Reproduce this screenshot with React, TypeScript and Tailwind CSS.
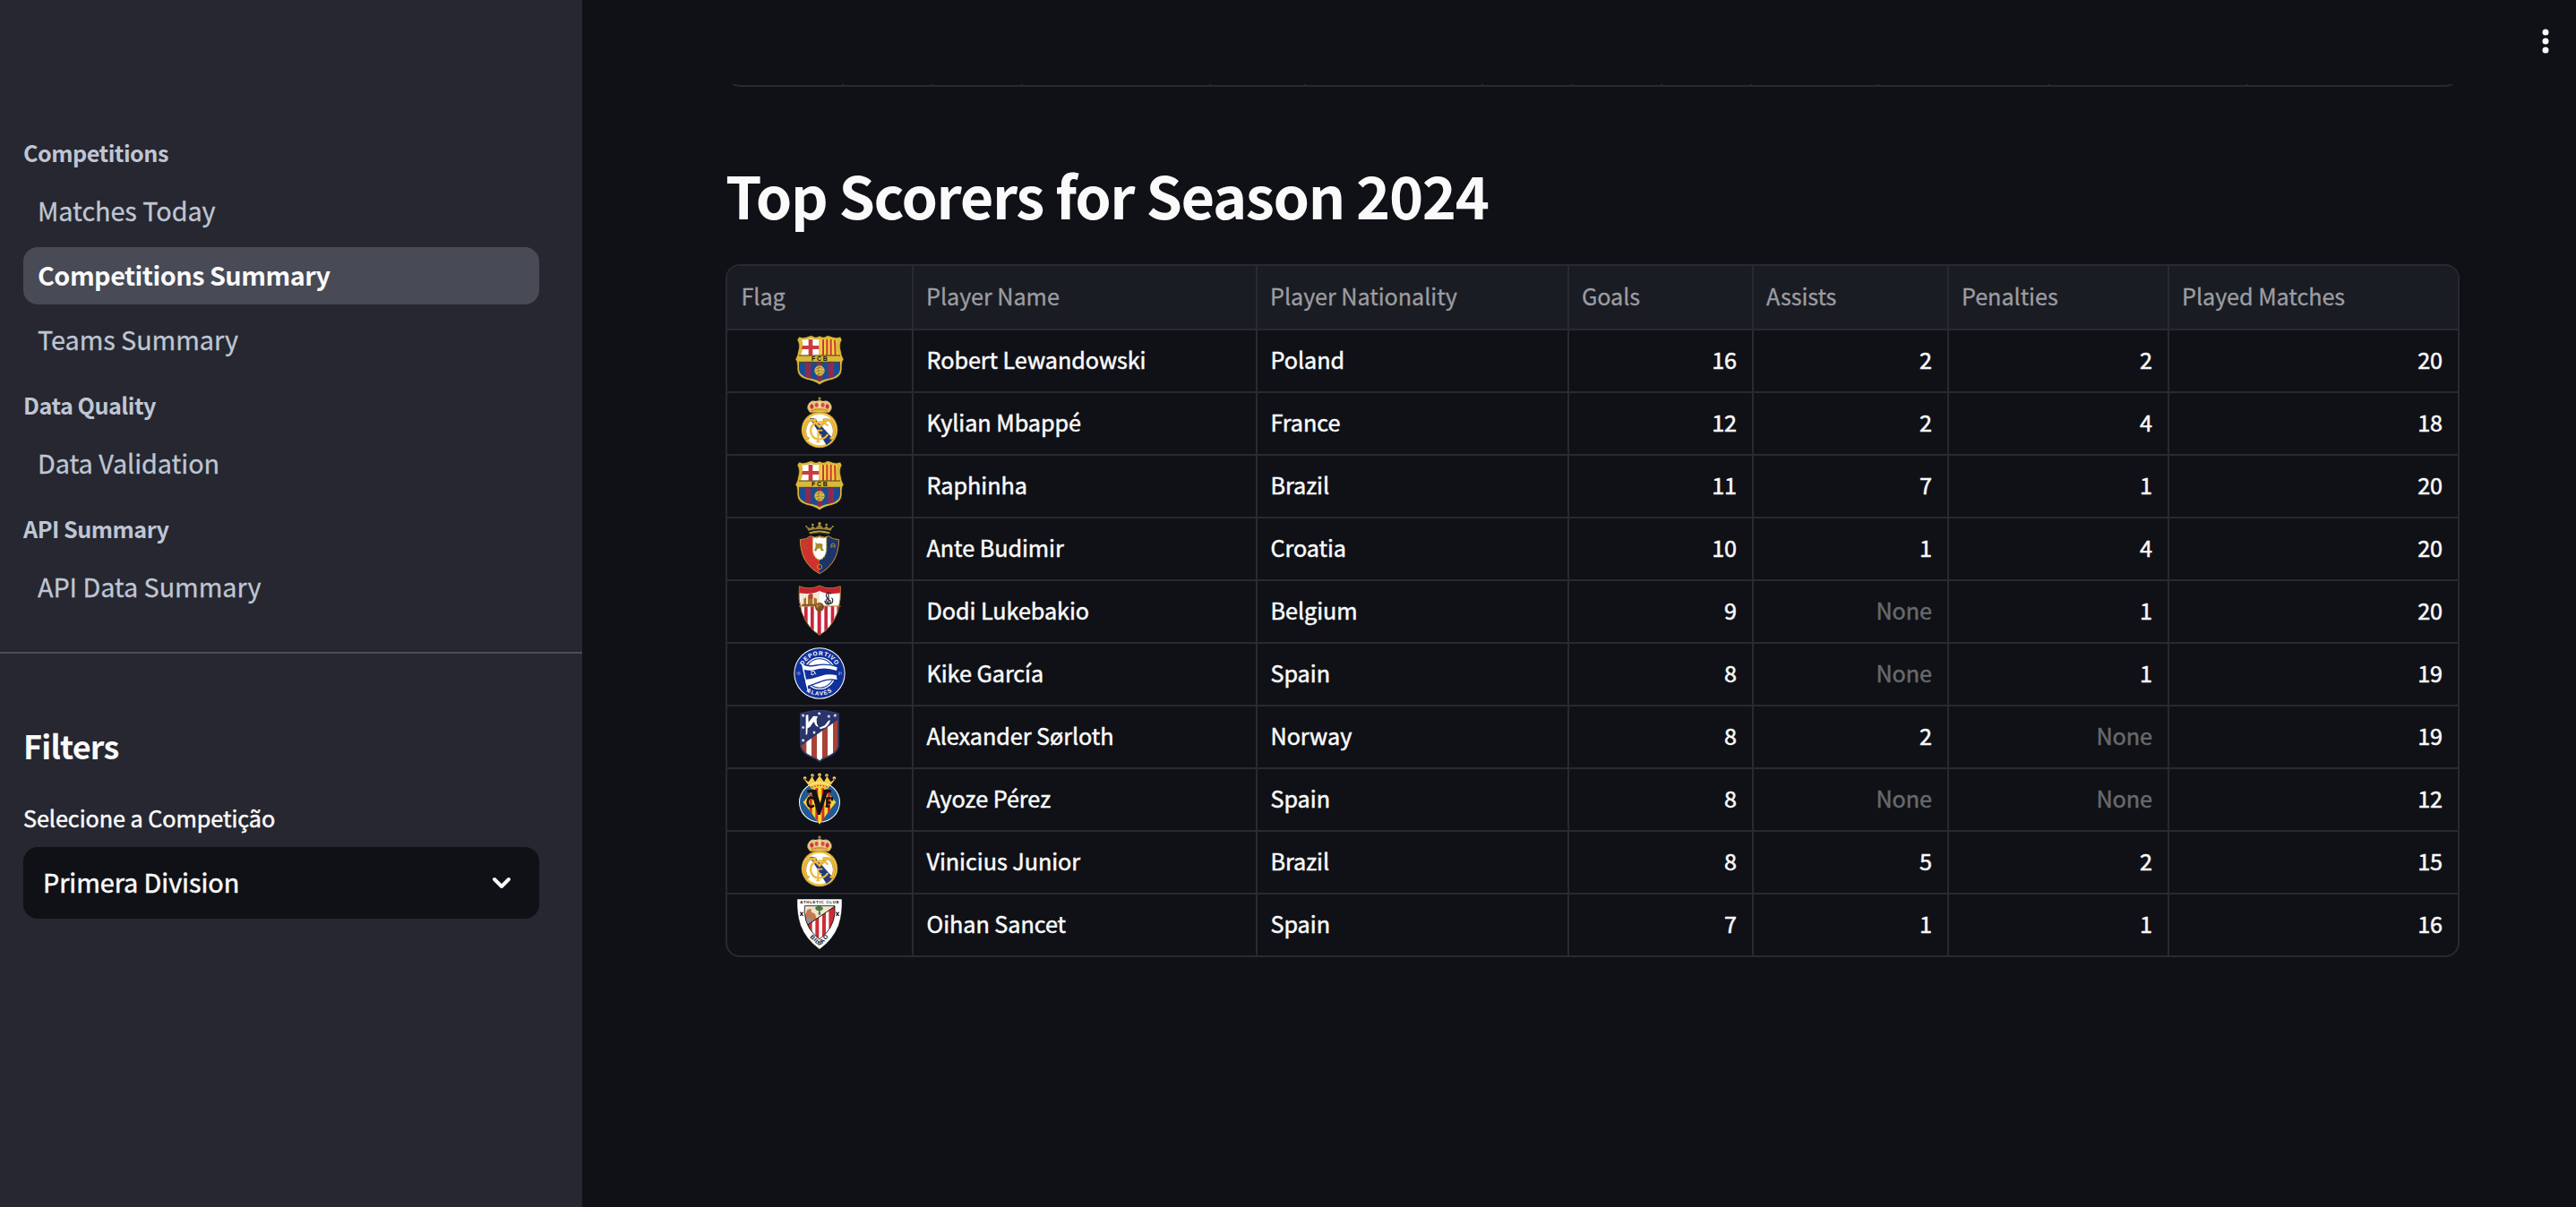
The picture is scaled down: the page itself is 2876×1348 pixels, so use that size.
import React, { ReactNode } from "react";

const Barcelona = () => (
  <svg viewBox="45 21 180 180" className="h-[60px] w-[60px]">
    <path d="M66 30Q78 36 92 31Q101 26 109 26Q122 36 135 27Q148 36 161 26Q168 26 178 31Q192 36 205 30L210 41Q200 56 207 78Q208 92 216 106Q210 112 210 126V140Q208 166 178 174Q148 180 135 191Q122 180 92 174Q62 166 60 140V126Q60 112 54 106Q62 92 63 78Q70 56 60 41Z" fill="#dcb83a" stroke="#191306" strokeWidth="2" />
    <path d="M76 40Q96 42 107 35Q120 43 133 38V92H72Q84 66 76 40Z" fill="#fff" />
    <path d="M98 39H112V92H98ZM78 60H133V72H75Z" fill="#cb3b3f" />
    <path d="M137 38Q150 43 163 35Q174 42 194 40Q186 66 198 92H137Z" fill="#f3d33c" />
    <path d="M144 40h6v52h-6zM157 38h6v54h-6zM170 39h6v53h-6zM183 41h6l2 51h-6z" fill="#c9363c" />
    <path d="M66 116H204V140Q202 160 174 168Q146 173 135 181Q124 173 96 168Q68 160 66 140Z" fill="#1c4c90" />
    <path d="M87 116h18v54q-12-2-18-6zM126 116h18v58l-9 7-9-7zM164 116h19v48q-8 4-19 6z" fill="#8e2a52" />
    <path d="M66 93H204M66 115H204" stroke="#2b2410" strokeWidth="2.500" />
    <circle cx="135" cy="144" r="17" fill="#e0c04a" />
    <path d="M122 138q12-8 26-2M120 148q14-8 31-2M126 157q10-6 22-4M134 128q-8 16 0 32" fill="none" stroke="#7c641c" strokeWidth="2" />
    <text x="137" y="111" textAnchor="middle" fontSize="21" fontWeight="700" letterSpacing="5" fill="#17130a" fontFamily="Liberation Sans, sans-serif">FCB</text>
  </svg>
);

const RealMadrid = () => (
  <svg viewBox="45 231 180 180" className="h-[60px] w-[60px]">
    <path d="M103 284Q88 268 98 256Q108 244 124 246Q135 240 146 246Q162 244 172 256Q182 268 167 284Z" fill="#e5c77a" stroke="#8c6f2c" strokeWidth="1.5" />
    <path d="M135 232v12M130 237h10" stroke="#d5ab45" strokeWidth="3" />
    <ellipse cx="109" cy="264" rx="6" ry="8" fill="#c9323f" />
    <ellipse cx="125" cy="259" rx="6" ry="8" fill="#d94a52" />
    <ellipse cx="146" cy="259" rx="6" ry="8" fill="#d94a52" />
    <ellipse cx="161" cy="264" rx="6" ry="8" fill="#c9323f" />
    <path d="M99 255Q110 240 125 250M171 255Q160 240 145 250M135 246V270" fill="none" stroke="#fff2cf" strokeWidth="2.5" />
    <path d="M104 275Q135 264 166 275V283Q135 274 104 283Z" fill="#e0b33c" />
    <path d="M108 278Q135 268 162 278" fill="none" stroke="#c6374a" strokeWidth="2.5" strokeDasharray="5 4" />
    <circle cx="135" cy="342" r="61" fill="#8a7430" />
    <circle cx="135" cy="342" r="59.5" fill="#efbf3c" />
    <circle cx="135" cy="342" r="52" fill="#fff" />
    <path d="M101 304L112 318 158 393Q171 385 180 372L123 309Q112 299 101 304Z" fill="#21397e" />
    <path d="M93 372Q80 346 91 324Q99 306 112 309L135 332L158 309Q172 306 179 324Q190 346 177 372M84 370H100M170 370H186M112 309H124M146 309H158" fill="none" stroke="#99752a" strokeWidth="8.500" />
    <path d="M93 372Q80 346 91 324Q99 306 112 309L135 332L158 309Q172 306 179 324Q190 346 177 372M84 370H100M170 370H186M112 309H124M146 309H158" fill="none" stroke="#efbb38" strokeWidth="6.500" />
    <path d="M163 329Q151 313 131 317Q105 322 105 346Q107 370 132 374Q153 374 163 357" fill="none" stroke="#efbb38" strokeWidth="7" />
    <path d="M130 382V344H145M130 360H142M124 382H136M126 344H140" fill="none" stroke="#efbb38" strokeWidth="5.500" />
  </svg>
);

const Osasuna = () => (
  <svg viewBox="45 21 180 180" className="h-[60px] w-[60px]">
    <path d="M97 50Q92 38 90 36L104 42 112 34 121 42 135 28 149 42 158 34 166 42 180 36Q178 38 173 50Q135 40 97 50Z" fill="#9a8434" />
    <circle cx="135" cy="26" r="5" fill="#b29a3e" />
    <circle cx="112" cy="30" r="4" fill="#b29a3e" />
    <circle cx="158" cy="30" r="4" fill="#b29a3e" />
    <circle cx="91" cy="36" r="3" fill="#b29a3e" />
    <circle cx="179" cy="36" r="3" fill="#b29a3e" />
    <path d="M101 58Q135 47 169 58" fill="none" stroke="#b8a048" strokeWidth="6" />
    <path d="M108 61Q135 52 162 61" fill="none" stroke="#6b5b25" strokeWidth="2" />
    <path d="M70 80Q92 80 104 68Q118 77 135 68Q152 77 166 68Q178 80 200 80Q199 130 176 160Q160 182 135 194Q110 182 94 160Q71 130 70 80Z" fill="#d0312f" stroke="#b5963b" strokeWidth="3" />
    <path d="M135 70Q152 77 166 70Q178 81 198 82Q197 130 174 159Q159 180 135 192Z" fill="#1c3468" />
    <path d="M112 72Q122 76 135 71Q148 76 158 72V104Q160 140 135 148Q110 140 112 104Z" fill="#fff" stroke="#c7a83e" strokeWidth="4" strokeDasharray="6 5" />
    <path d="M121 88l6 6 10-2 9 3-2 12 6 10-9 1-5-9-8 2-5 8-6-2 5-14z" fill="#a68b2e" />
    <path d="M96 94Q84 90 84 101Q85 112 96 107" fill="none" stroke="#a5572b" strokeWidth="3.5" />
    <path d="M174 108V96Q180 90 186 96V108M174 102H186" fill="none" stroke="#a18a48" strokeWidth="3" />
    <circle cx="135" cy="171" r="8" fill="none" stroke="#b58a34" strokeWidth="3" />
  </svg>
);

const Sevilla = () => (
  <svg viewBox="45 231 180 180" className="h-[60px] w-[60px]">
    <clipPath id="sevilla-shield"><path d="M67 236Q104 250 135 234Q166 250 205 236Q208 280 196 322Q176 376 135 400Q94 376 75 322Q62 280 67 236Z" /></clipPath>
    <g clipPath="url(#sevilla-shield)">
      <path d="M60 230h150v180H60z" fill="#fff" />
      <path d="M84 302h11v100H84zM105 302h11v100h-11zM128 302h12v100h-12zM151 302h11v100h-11zM173 302h11v100h-11zM193 302h10v100h-10z" fill="#c9253c" />
      <path d="M60 230h150v28Q160 266 135 252Q110 266 60 258z" fill="#c4242f" />
      <path d="M70 260Q110 266 135 254V304H72Z" fill="#f3e7d2" />
      <path d="M82 300V278l8-4v26zM96 300V268l6-8h10v40zM116 300V274l10 4v22z" fill="#a8742c" />
      <path d="M100 264h12v14h-12z" fill="#bd3b33" />
      <path d="M76 296h54v7H76z" fill="#7b5424" />
    </g>
    <path d="M67 236Q104 250 135 234Q166 250 205 236Q208 280 196 322Q176 376 135 400Q94 376 75 322Q62 280 67 236Z" fill="none" stroke="#a46a25" strokeWidth="3" />
    <path d="M66 303H206" stroke="#b77b38" strokeWidth="3" />
    <path d="M174 262Q158 252 157 267Q159 278 170 284Q177 296 162 297Q153 294 153 284M165 257V300M174 276Q182 276 178 290Q172 299 160 290Q154 280 164 276" fill="none" stroke="#28242b" strokeWidth="3.5" />
    <circle cx="135" cy="306" r="15" fill="#81501f" />
    <circle cx="132" cy="302" r="8" fill="#b98239" />
    <path d="M124 312q12-12 22-7M130 293q8 10 4 26" fill="none" stroke="#5f3715" strokeWidth="2" />
  </svg>
);

const Alaves = () => (
  <svg viewBox="45 441 180 180" className="h-[60px] w-[60px]">
    <circle cx="135" cy="528" r="86" fill="#fff" />
    <circle cx="135" cy="528" r="83" fill="#10309b" />
    <circle cx="135" cy="528" r="54" fill="#fff" />
    <circle cx="135" cy="528" r="50" fill="#10309b" />
    <circle cx="135" cy="528" r="47" fill="#fff" />
    <path d="M76 494Q96 508 124 501Q158 494 196 506Q192 528 196 552Q168 544 144 554Q112 566 89 574L84 540Z" fill="#fff" stroke="#10309b" strokeWidth="4" />
    <path d="M82 515Q108 522 132 513Q162 508 193 519V535Q164 528 142 536Q112 546 87 549Z" fill="#10309b" />
    <path d="M108 518V534M108 520Q119 518 119 526Q117 534 108 533M116 520L123 532" fill="none" stroke="#fff" strokeWidth="2.5" />
    <path d="M76 494L98 592" stroke="#fff" strokeWidth="4" />
    <path id="alaves-top" d="M74.500 528A60.500 60.500 0 0 1 195.500 528" fill="none" />
    <path id="alaves-bottom" d="M61 528A74 74 0 0 0 209 528" fill="none" />
    <text fontSize="20" fontWeight="700" letterSpacing="2.200" fill="#fff" fontFamily="Liberation Sans, sans-serif"><textPath href="#alaves-top" startOffset="50%" textAnchor="middle">DEPORTIVO</textPath></text>
    <text fontSize="19" fontWeight="700" letterSpacing="3" fill="#fff" fontFamily="Liberation Sans, sans-serif"><textPath href="#alaves-bottom" startOffset="50%" textAnchor="middle">ALAVÉS</textPath></text>
    <path d="M60 524v8M64 524h5v8h-5zM199 524h5v4h-5v4h5M208 524v8" fill="none" stroke="#c4cff0" strokeWidth="1.500" />
  </svg>
);

const Atletico = () => (
  <svg viewBox="45 21 180 180" className="h-[60px] w-[60px]">
    <clipPath id="atletico-shield"><path d="M72 33Q103 26 135 20Q167 26 198 33V143Q192 164 162 178Q144 184 135 193Q126 184 108 178Q78 164 72 143Z" /></clipPath>
    <g clipPath="url(#atletico-shield)">
      <path d="M60 10h150v190H60z" fill="#fff" />
      <path d="M70 100h21v100H70zM108 80h18v120h-18zM144 60h18v140h-18zM180 30h20v170h-20z" fill="#a84236" />
      <path d="M60 10h150v34L76 138H60z" fill="#28346b" />
      <path d="M89 104V38l8-2 1 26 16-21 15 1-4 10 1 14 6 12-9-4-8-14-12 18-8 4-1 20zM134 80l18-7 13-17 6-1-4 12-11 12-18 6z" fill="#fff" />
    </g>
    <path d="M72 33Q103 26 135 20Q167 26 198 33V143Q192 164 162 178Q144 184 135 193Q126 184 108 178Q78 164 72 143Z" fill="none" stroke="#343b68" strokeWidth="5" />
    {[[80, 39], [134, 32], [187, 39], [80, 79], [166, 42], [117, 96], [80, 122]].map(([x, y]) => (
      <path key={`${x}-${y}`} transform={`translate(${x} ${y})`} d="M0-6L1.600-2 6-2 2.600 1 4 6 0 3-4 6-2.600 1-6-2-1.600-2Z" fill="#fff" />
    ))}
  </svg>
);

const Villarreal = () => (
  <svg viewBox="45 231 180 180" className="h-[60px] w-[60px]">
    <ellipse cx="135" cy="330" rx="69" ry="68" fill="#fff" />
    <ellipse cx="135" cy="330" rx="66" ry="65" fill="#215a92" />
    <path d="M135 262L190 330Q162 364 135 404Q108 364 80 330Z" fill="#f8d72f" />
    <path d="M101 302h9v67l-9-13zM121 280h9v117l-9-13zM142 278h9v106l-9 13zM162 296h9v60l-9 13z" fill="#d32d2c" />
    <path d="M109 286Q94 268 82 251L98 262 110 243 120 262 135 241 150 262 160 243 172 262 188 251Q176 268 161 286Q135 276 109 286Z" fill="#f3cf4b" />
    <path d="M104 272Q135 256 166 272" fill="none" stroke="#fff2b0" strokeWidth="3" />
    {[[86, 249], [111, 240], [135, 238], [159, 240], [184, 249]].map(([x, y]) => (
      <g key={x}><circle cx={x} cy={y} r="5.500" fill="#fbe374" /><circle cx={x} cy={y + 2} r="2.500" fill="#c42f24" /></g>
    ))}
    <path d="M107 280Q135 268 163 280" fill="none" stroke="#b23a22" strokeWidth="4" strokeDasharray="5 5" />
    <path d="M94 288H125V294L137 333L148 294V288H174V298H162L137 372H129L108 298H94Z" fill="#151012" />
    <path d="M116 319Q108 310 99 316Q91 330 99 342Q110 349 116 340" fill="none" stroke="#151012" strokeWidth="8" />
    <path d="M160 347V316H177V325M160 331H173M155 344H168" fill="none" stroke="#151012" strokeWidth="7" />
  </svg>
);

const Athletic = () => (
  <svg viewBox="45 651 180 180" className="h-[60px] w-[60px]">
    <path d="M60 654H210Q212 704 199 742Q181 790 135 823Q89 790 71 742Q58 704 60 654Z" fill="#fff" stroke="#0a0a0c" strokeWidth="1.500" />
    <clipPath id="athletic-inner"><path d="M85 677H186V703Q181 754 135 789Q89 754 85 703Z" /></clipPath>
    <g clipPath="url(#athletic-inner)">
      <path d="M80 670h110v130H80z" fill="#ece5cc" />
      <path d="M84 712L90 700 94 690 106 686 108 698 120 704 126 722 92 744z" fill="#c8764f" />
      <path d="M88 722q10-12 22 0l-14 18z" fill="#8b8fa6" />
      <path d="M121 682q14-10 26 2-2 10-10 9l2 14h-8l1-14q-12 0-11-11z" fill="#4c7a42" />
      <path d="M90 744L190 676V800H90z" fill="#fff" />
      <path d="M96 740l14-9v70H96zM121 723l12-8v90h-12zM144 707l12-8v90h-12zM166 692l20-14v80l-20 20z" fill="#d02c34" />
      <path d="M88 746L190 676" stroke="#111" strokeWidth="3" />
    </g>
    <path d="M85 677H186V703Q181 754 135 789Q89 754 85 703Z" fill="none" stroke="#111" strokeWidth="2.500" />
    <text x="135" y="669" textAnchor="middle" fontSize="13" fontWeight="700" textLength="130" fill="#111" fontFamily="Liberation Sans, sans-serif">ATHLETIC CLUB</text>
    <path d="M70 698l10 13M80 698l-10 13M190 698l10 13M200 698l-10 13" stroke="#111" strokeWidth="3.500" />
    <path id="bilbao-arc" d="M95 775L122 801Q135 814 148 801L180 763" fill="none" />
    <text fontSize="20" fontWeight="700" fill="#111" fontFamily="Liberation Sans, sans-serif"><textPath href="#bilbao-arc" startOffset="10" textLength="84">BILBAO</textPath></text>
  </svg>
);

type Scorer = { badge: () => ReactNode; name: string; country: string; stats: (number | null)[] };

const scorers: Scorer[] = [
  { badge: Barcelona, name: "Robert Lewandowski", country: "Poland", stats: [16, 2, 2, 20] },
  { badge: RealMadrid, name: "Kylian Mbappé", country: "France", stats: [12, 2, 4, 18] },
  { badge: Barcelona, name: "Raphinha", country: "Brazil", stats: [11, 7, 1, 20] },
  { badge: Osasuna, name: "Ante Budimir", country: "Croatia", stats: [10, 1, 4, 20] },
  { badge: Sevilla, name: "Dodi Lukebakio", country: "Belgium", stats: [9, null, 1, 20] },
  { badge: Alaves, name: "Kike García", country: "Spain", stats: [8, null, 1, 19] },
  { badge: Atletico, name: "Alexander Sørloth", country: "Norway", stats: [8, 2, null, 19] },
  { badge: Villarreal, name: "Ayoze Pérez", country: "Spain", stats: [8, null, null, 12] },
  { badge: RealMadrid, name: "Vinicius Junior", country: "Brazil", stats: [8, 5, 2, 15] },
  { badge: Athletic, name: "Oihan Sancet", country: "Spain", stats: [7, 1, 1, 16] },
];

const headers = ["Flag", "Player Name", "Player Nationality", "Goals", "Assists", "Penalties", "Played Matches"];
const columns = "grid grid-cols-[208px_384px_348px_206px_218px_246px_322px]";
const line = "border-[#292a2f]";
// Thickens the regular weight slightly.
const sturdy = "[-webkit-text-stroke:0.5px_currentColor]";

const NavSection = ({ title, items, active, className }: { title: string; items: string[]; active?: string; className: string }) => (
  <section className={className}>
    <h3 className="h-8 text-[25.2px] leading-8 font-bold tracking-[-0.02em] text-[#bfc5d3]">{title}</h3>
    <ul className="mt-[18px] flex flex-col gap-2">
      {items.map((item) => (
        <li
          key={item}
          className={
            item === active
              ? "flex h-16 items-center rounded-2xl bg-[#484a55] px-4 pb-px text-[28.8px] leading-none font-bold tracking-[-0.018em] text-[#fafafa]"
              : "flex h-16 items-center rounded-2xl px-4 pb-0.5 text-[28.8px] leading-none tracking-[-0.002em] text-[#bfc5d3] [-webkit-text-stroke:0.3px_currentColor]"
          }
        >
          {item}
        </li>
      ))}
    </ul>
  </section>
);

const Sidebar = () => (
  <aside className="h-full w-[650px] shrink-0 bg-[#262730]">
    <nav className="flex h-[730px] flex-col border-b-2 border-[#4c4d56] pt-[154px] pr-12 pl-[26px]">
      <NavSection className="h-[282px]" title="Competitions" items={["Matches Today", "Competitions Summary", "Teams Summary"]} active="Competitions Summary" />
      <NavSection className="h-[138px]" title="Data Quality" items={["Data Validation"]} />
      <NavSection className="h-[138px]" title="API Summary" items={["API Data Summary"]} />
    </nav>
    <div className="pt-[78px] pr-12 pl-[26px] text-[#fafafa]">
      <h2 className="h-12 text-[36px] leading-[48px] font-bold tracking-[-0.022em]">Filters</h2>
      <p className={`mt-[41px] h-8 text-[25.2px] leading-8 tracking-[-0.002em] ${sturdy}`}>Selecione a Competição</p>
      <div className="mt-[17px] flex h-20 items-center justify-between rounded-2xl bg-[#0f1116] pr-[31px] pl-[22px] text-[28.8px] leading-none">
        <span className={`pb-px tracking-[-0.002em] ${sturdy}`}>Primera Division</span>
        <svg viewBox="0 0 22 16" className="h-4 w-[22px]" fill="none" stroke="#fafafa" strokeWidth="4" strokeLinecap="round" strokeLinejoin="round">
          <path d="M3 4L11 12L19 4" />
        </svg>
      </div>
    </div>
  </aside>
);

const PreviousTableEdge = () => (
  <div className="mt-[94px] flex h-[3px] items-end overflow-hidden">
    <div className={`flex h-16 w-[1936px] shrink-0 rounded-2xl border-2 ${line}`}>
      {[130, 100, 100, 210, 106, 198, 100, 100, 100, 142, 190, 222].map((w, i) => (
        <div key={i} className={`shrink-0 border-r-2 ${line}`} style={{ width: w }} />
      ))}
    </div>
  </div>
);

const ScorersTable = () => (
  <div className={`mt-[34px] w-[1936px] overflow-hidden rounded-2xl border-2 text-[25.2px] leading-none tracking-[-0.002em] ${line}`}>
    <div className={`${columns} h-[72px] border-b-2 bg-[#1a1c23] text-[#9c9da1] [-webkit-text-stroke:0.3px_currentColor] ${line}`}>
      {headers.map((h) => (
        <div key={h} className={`flex items-center border-r-2 pb-0.5 pl-3.5 first:pl-[15.5px] last:border-r-0 ${line}`}>{h}</div>
      ))}
    </div>
    {scorers.map(({ badge: Badge, name, country, stats }) => (
      <div key={name} className={`${columns} h-[70px] border-b-2 text-[#fafafa] last:h-[68px] last:border-b-0 ${sturdy} ${line}`}>
        <div className={`flex items-center justify-center border-r-2 ${line}`}><Badge /></div>
        <div className={`flex items-center border-r-2 pb-[3px] pl-[14.5px] ${line}`}>{name}</div>
        <div className={`flex items-center border-r-2 pb-[3px] pl-[14.5px] ${line}`}>{country}</div>
        {stats.map((s, i) => (
          <div key={i} className={`flex items-center justify-end border-r-2 pr-[17px] pb-[3px] last:border-r-0 ${line}`}>
            {s === null ? <span className="text-[#68696d]">None</span> : s}
          </div>
        ))}
      </div>
    ))}
  </div>
);

export default function App() {
  return (
    <div className="flex h-[1348px] w-[2876px] overflow-hidden bg-[#0f1116] font-['Noto_Sans_CJK_SC',sans-serif]">
      <Sidebar />
      <main className="relative flex-1 pl-40">
        <svg viewBox="0 0 10 30" className="absolute top-[31px] right-[29px] h-[30px] w-[10px]" fill="#fafafa">
          <circle cx="5" cy="5" r="3.500" />
          <circle cx="5" cy="15" r="3.500" />
          <circle cx="5" cy="25" r="3.500" />
        </svg>
        <PreviousTableEdge />
        <h1 className="mt-[76px] h-[88px] text-[64.8px] leading-[88px] font-bold tracking-[-0.0215em] text-[#fafafa]">Top Scorers for Season 2024</h1>
        <ScorersTable />
      </main>
    </div>
  );
}
